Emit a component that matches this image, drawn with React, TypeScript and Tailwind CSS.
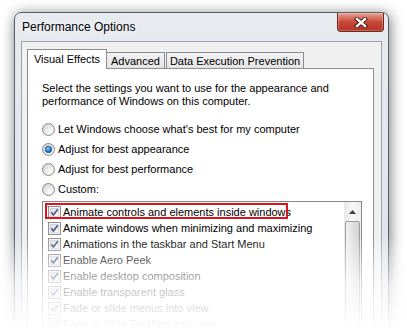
import React from 'react';

const items = [
  'Animate controls and elements inside windows',
  'Animate windows when minimizing and maximizing',
  'Animations in the taskbar and Start Menu',
  'Enable Aero Peek',
  'Enable desktop composition',
  'Enable transparent glass',
  'Fade or slide menus into view',
  'Fade or slide ToolTips into view',
];

const radios = [
  { label: "Let Windows choose what's best for my computer", checked: false },
  { label: 'Adjust for best appearance', checked: true },
  { label: 'Adjust for best performance', checked: false },
  { label: 'Custom:', checked: false },
];

const Radio = ({ checked }: { checked: boolean }) => (
  <svg width="13" height="13" viewBox="0 0 13 13" className="shrink-0">
    <defs>
      <radialGradient id="rOff" cx="0.65" cy="0.7" r="0.7">
        <stop offset="0" stopColor="#ffffff" />
        <stop offset="1" stopColor="#d6d6d6" />
      </radialGradient>
      <radialGradient id="rOn" cx="0.4" cy="0.35" r="0.7">
        <stop offset="0" stopColor="#8fd3ff" />
        <stop offset="0.6" stopColor="#2a7fd0" />
        <stop offset="1" stopColor="#124f95" />
      </radialGradient>
    </defs>
    <circle cx="6.5" cy="6.5" r="6" fill="url(#rOff)" stroke="#8b8b8b" strokeWidth="1" />
    {checked && <circle cx="6.5" cy="6.5" r="3.2" fill="url(#rOn)" stroke="#1c4f8c" strokeWidth="0.8" />}
  </svg>
);

const Check = () => (
  <svg width="13" height="13" viewBox="0 0 13 13" className="shrink-0">
    <defs>
      <linearGradient id="cb" x1="0" y1="0" x2="1" y2="1">
        <stop offset="0" stopColor="#dcdcdc" />
        <stop offset="1" stopColor="#fdfdfd" />
      </linearGradient>
    </defs>
    <rect x="0.5" y="0.5" width="12" height="12" fill="#f4f4f4" stroke="#8e8f8f" />
    <rect x="2.5" y="2.5" width="8" height="8" fill="url(#cb)" stroke="#c9c9c9" strokeWidth="0.6" />
    <path d="M3.3 6.4 L5.4 9 L9.8 3.2" fill="none" stroke="#485d94" strokeWidth="1.7" strokeLinejoin="round" />
  </svg>
);

export default function App() {
  return (
    <div
      className="relative w-[407px] h-[330px] overflow-hidden bg-white pl-[14px] pt-[12px] text-[11px] leading-[13px] text-black"
      style={{ fontFamily: '"Liberation Sans", Arial, sans-serif' }}
    >
      {/* window */}
      <div className="w-[375px] h-[380px] rounded-t-[7px] border border-[#566069] bg-linear-to-b from-[#e7ebf0] to-[#dae0e8] shadow-[1px_2px_14px_rgba(0,0,0,0.55)] flex flex-col">
        {/* title bar */}
        <div className="flex h-[28px] justify-between">
          <div className="pl-[7px] pt-[7px] text-[12px] leading-[14px] text-black [text-shadow:0_0_6px_#ffffff]">
            Performance Options
          </div>
          <div className="mr-[4px] w-[47px] h-[19px] rounded-b-[4px] border border-t-0 border-[#6a2a22] bg-linear-to-b from-[#e7a294] via-[#c8493a] to-[#b23322] flex items-center justify-center shadow-[inset_0_0_0_1px_rgba(255,255,255,0.25)]">
            <svg width="14" height="11" viewBox="0 0 14 11">
              <path d="M3 2 L11 9 M11 2 L3 9" stroke="#3a0f0a" strokeWidth="4.2" strokeLinecap="square" />
              <path d="M3 2 L11 9 M11 2 L3 9" stroke="#ffffff" strokeWidth="2.4" strokeLinecap="square" />
            </svg>
          </div>
        </div>

        {/* client area */}
        <div className="mx-[6px] flex-1 border border-b-0 border-[#98a3af] bg-[#f0f0f0] pl-[5px] pr-[7px] pt-[7px]">
          {/* tabs */}
          <div className="flex items-end h-[19px]">
            <div className="relative z-10 -mb-px w-[80px] h-[20px] border border-b-0 border-[#898c95] bg-white flex items-center justify-center">
              Visual Effects
            </div>
            <div className="w-[58px] h-[16px] border border-b-0 border-l-0 border-[#898c95] bg-linear-to-b from-[#f3f3f3] to-[#e4e4e4] flex items-center justify-center pt-px">
              Advanced
            </div>
            <div className="ml-px w-[138px] h-[16px] border border-b-0 border-[#898c95] bg-linear-to-b from-[#f3f3f3] to-[#e4e4e4] flex items-center justify-center pt-px">
              Data Execution Prevention
            </div>
          </div>

          {/* tab page */}
          <div className="w-[347px] h-[300px] border border-[#898c95] bg-white pl-[14px] pt-[13px]">
            <p>
              Select the settings you want to use for the appearance and
              <br />
              performance of Windows on this computer.
            </p>

            <div className="mt-[11px] flex flex-col">
              {radios.map((r) => (
                <div key={r.label} className="flex h-[20px] items-center gap-[3px]">
                  <Radio checked={r.checked} />
                  <span>{r.label}</span>
                </div>
              ))}
            </div>

            {/* list */}
            <div className="relative mt-[2px] w-[320px] h-[160px] border border-[#828790] bg-white flex">
              <div className="flex-1 pt-[2px]">
                {items.map((t) => (
                  <div key={t} className="flex h-[16px] items-center gap-[2px] pl-[5px]">
                    <Check />
                    <span>{t}</span>
                  </div>
                ))}
              </div>
              <div className="w-[17px] bg-linear-to-r from-[#e9e9e9] via-[#f7f7f7] to-[#eeeeee] flex flex-col items-center">
                <div className="h-[19px] flex items-center justify-center">
                  <svg width="7" height="4" viewBox="0 0 7 4">
                    <polygon points="0,4 3.5,0 7,4" fill="#3c3c3c" />
                  </svg>
                </div>
                <div className="w-[15px] h-[120px] rounded-[2px] border border-[#9b9b9b] bg-linear-to-r from-[#f2f2f2] via-[#e2e2e2] to-[#d4d4d4]" />
              </div>
              <div className="absolute left-[2px] top-px w-[243px] h-[16px] border-2 border-[#e0121b]" />
            </div>
          </div>
        </div>
      </div>

      {/* fade toward bottom */}
      <div className="absolute inset-x-0 bottom-0 h-[95px] bg-linear-to-b from-white/0 via-white/70 to-white" />
    </div>
  );
}
